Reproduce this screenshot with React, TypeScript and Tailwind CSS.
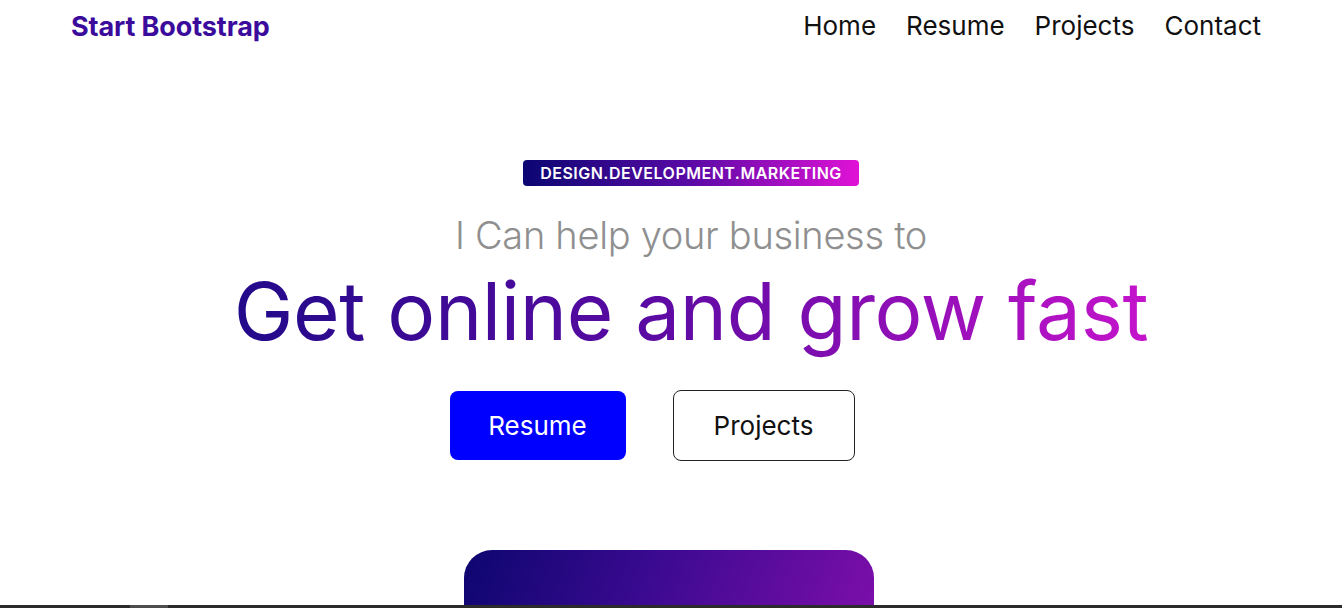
import React from "react";

export default function App() {
  const font = { fontFamily: "Inter, 'Noto Sans', sans-serif" };
  return (
    <div className="relative h-[608px] w-[1342px] overflow-hidden bg-white" style={font}>
      {/* Navbar */}
      <nav className="flex h-[52px] items-center justify-between pl-[71px] pr-[81px]">
        <a className="text-[27px] font-bold leading-none tracking-[-0.1px] text-[#3b0b9c]">Start Bootstrap</a>
        <ul className="flex items-center gap-[30px] text-[26px] leading-none text-[#111]">
          <li>Home</li>
          <li>Resume</li>
          <li>Projects</li>
          <li>Contact</li>
        </ul>
      </nav>

      {/* Hero */}
      <section className="flex flex-col items-center pl-[40px] pt-[108px]">
        <div className="flex h-[26px] items-center rounded-[4px] bg-[linear-gradient(90deg,#0b0672_0%,#5a0aa6_50%,#e012d6_100%)] px-[17px] text-[16px] font-semibold leading-none tracking-[0.5px] text-white">
          DESIGN.DEVELOPMENT.MARKETING
        </div>
        <div className="mt-[27px] text-[38px] font-light leading-[44px] tracking-[-0.3px] text-[#8f8f8f]">
          I Can help your business to
        </div>
        <h1 className="mt-[9px] bg-[linear-gradient(90deg,#220a8a_0%,#5a0aa2_45%,#c414cb_100%)] bg-clip-text pb-[10px] text-[80px] font-normal leading-[90px] tracking-[-0.35px] text-transparent">
          Get online and grow fast
        </h1>
      </section>

      <div className="flex justify-center pr-[38px] pt-[24px]">
        <div className="flex items-center gap-[47px]">
          <button className="flex h-[69px] w-[176px] items-center justify-center rounded-[8px] bg-[#0000ff] text-[26px] text-white">
            Resume
          </button>
          <button className="flex h-[71px] w-[182px] items-center justify-center rounded-[8px] border border-[#222] text-[26px] text-[#111]">
            Projects
          </button>
        </div>
      </div>

      <div className="flex justify-center pr-[4px] pt-[89px]">
        <div className="h-[80px] w-[410px] rounded-t-[28px] bg-[linear-gradient(110deg,#0d0670_0%,#3b0a90_45%,#7d0eaa_100%)]" />
      </div>

      <div className="absolute bottom-0 left-0 flex h-[3px] w-full bg-[#2b2b2b]">
        <div className="ml-[130px] h-full w-[38px] bg-[#4d4d4d]" />
      </div>
    </div>
  );
}
